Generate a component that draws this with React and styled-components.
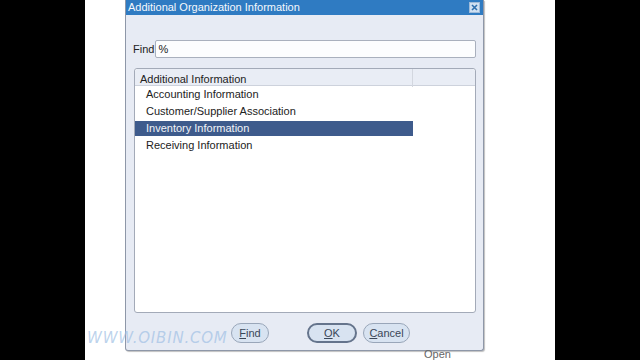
import React from 'react'
import styled, { createGlobalStyle } from 'styled-components'

const Global = createGlobalStyle`
  html, body {
    margin: 0;
    padding: 0;
    background: #000;
  }
  body {
    font-family: 'Liberation Sans', Arial, sans-serif;
    overflow: hidden;
  }
`

const Frame = styled.div`
  width: 640px;
  height: 360px;
  display: flex;
  position: relative;
  overflow: hidden;
`

const SideBar = styled.div`
  width: ${p => p.w}px;
  background: #000;
  flex: none;
`

const Stage = styled.div`
  width: 470px;
  background: #fff;
  display: flex;
  flex-direction: column;
  padding-left: 40px;
  box-sizing: border-box;
`

const Dialog = styled.div`
  width: 359px;
  height: 354px;
  background: #e7ebf4;
  border: 1px solid #8e97a8;
  border-top: none;
  border-radius: 0 0 3px 3px;
  box-sizing: border-box;
  display: flex;
  flex-direction: column;
  box-shadow: 1px 1px 1px rgba(0,0,0,0.25);
`

const TitleBar = styled.div`
  height: 15px;
  background: #2f7bc2;
  display: flex;
  align-items: center;
  justify-content: space-between;
  padding: 0 3px 0 2px;
`

const TitleText = styled.span`
  color: #f4f8fc;
  font-size: 11px;
  line-height: 15px;
`

const CloseBox = styled.div`
  width: 11px;
  height: 11px;
  background: #cfe0f2;
  border: 1px solid #9fbbd9;
  box-sizing: border-box;
  display: flex;
  align-items: center;
  justify-content: center;
`

const Body = styled.div`
  flex: 1;
  display: flex;
  flex-direction: column;
  padding: 25px 7px 0 7px;
`

const FindRow = styled.div`
  display: flex;
  align-items: center;
  gap: 1px;
`

const Label = styled.span`
  font-size: 11px;
  color: #222;
`

const Input = styled.div`
  flex: 1;
  height: 18px;
  background: #fcfdfe;
  border: 1px solid #a9b0bd;
  border-radius: 2px;
  box-sizing: border-box;
  font-size: 11px;
  line-height: 16px;
  padding-left: 2px;
  color: #222;
`

const ListBox = styled.div`
  margin: 10px 0 0 1px;
  height: 245px;
  background: #fff;
  border: 1px solid #a3aab8;
  border-radius: 3px;
  box-sizing: border-box;
  display: flex;
  flex-direction: column;
`

const Header = styled.div`
  height: 16px;
  background: #e9edf5;
  border-bottom: 1px solid #cdd2dc;
  display: grid;
  grid-template-columns: 278px 1fr;
  border-radius: 3px 3px 0 0;
`

const HeaderCell = styled.div`
  font-size: 11px;
  line-height: 16px;
  padding-top: 2px;
  color: #222;
  padding-left: 5px;
  border-right: ${p => (p.last ? 'none' : '1px solid #d3d7df')};
`

const Row = styled.div`
  height: 17px;
  display: flex;
  align-items: center;
`

const RowCell = styled.div`
  width: 278px;
  height: 15px;
  font-size: 11px;
  line-height: 15px;
  padding-left: 11px;
  box-sizing: border-box;
  background: ${p => (p.selected ? '#3e5b8c' : 'transparent')};
  color: ${p => (p.selected ? '#f2f4f8' : '#222')};
`

const ButtonBar = styled.div`
  display: flex;
  align-items: center;
  padding: 10px 0 0 98px;
`

const Button = styled.div`
  height: 20px;
  width: ${p => p.w}px;
  margin-left: ${p => p.ml}px;
  border: ${p => (p.primary ? '2px solid #65748c' : '1px solid #99a6b9')};
  border-radius: 10px;
  background: #d8e3f1;
  box-sizing: border-box;
  font-size: 11px;
  color: #3a4658;
  display: flex;
  align-items: center;
  justify-content: center;
  u { text-decoration: underline; }
`

const Watermark = styled.div`
  position: absolute;
  left: 87px;
  top: 329px;
  font-size: 15px;
  font-style: italic;
  letter-spacing: 0.8px;
  color: rgba(160, 192, 228, 0.7);
  font-family: 'DejaVu Sans', sans-serif;
  pointer-events: none;
`

const Behind = styled.div`
  margin: -3px 0 0 299px;
  font-size: 11px;
  color: #666;
  line-height: 12px;
`

const items = [
  'Accounting Information',
  'Customer/Supplier Association',
  'Inventory Information',
  'Receiving Information',
]

export default function App() {
  return (
    <>
      <Global />
      <Frame>
        <SideBar w={85} />
        <Stage>
          <Dialog>
            <TitleBar>
              <TitleText>Additional Organization Information</TitleText>
              <CloseBox>
                <svg width="7" height="7" viewBox="0 0 7 7">
                  <path d="M1 1 L6 6 M6 1 L1 6" stroke="#2e6fae" strokeWidth="1.6" />
                </svg>
              </CloseBox>
            </TitleBar>
            <Body>
              <FindRow>
                <Label>Find</Label>
                <Input>%</Input>
              </FindRow>
              <ListBox>
                <Header>
                  <HeaderCell>Additional Information</HeaderCell>
                  <HeaderCell last />
                </Header>
                {items.map((t, i) => (
                  <Row key={t}>
                    <RowCell selected={i === 2}>{t}</RowCell>
                  </Row>
                ))}
              </ListBox>
              <ButtonBar>
                <Button w={38} ml={0}><span><u>F</u>ind</span></Button>
                <Button w={50} ml={38} primary><span><u>O</u>K</span></Button>
                <Button w={47} ml={6}><span><u>C</u>ancel</span></Button>
              </ButtonBar>
            </Body>
          </Dialog>
          <Behind>Open</Behind>
        </Stage>
        <SideBar w={85} />
        <Watermark>WWW.OIBIN.COM</Watermark>
      </Frame>
    </>
  )
}
